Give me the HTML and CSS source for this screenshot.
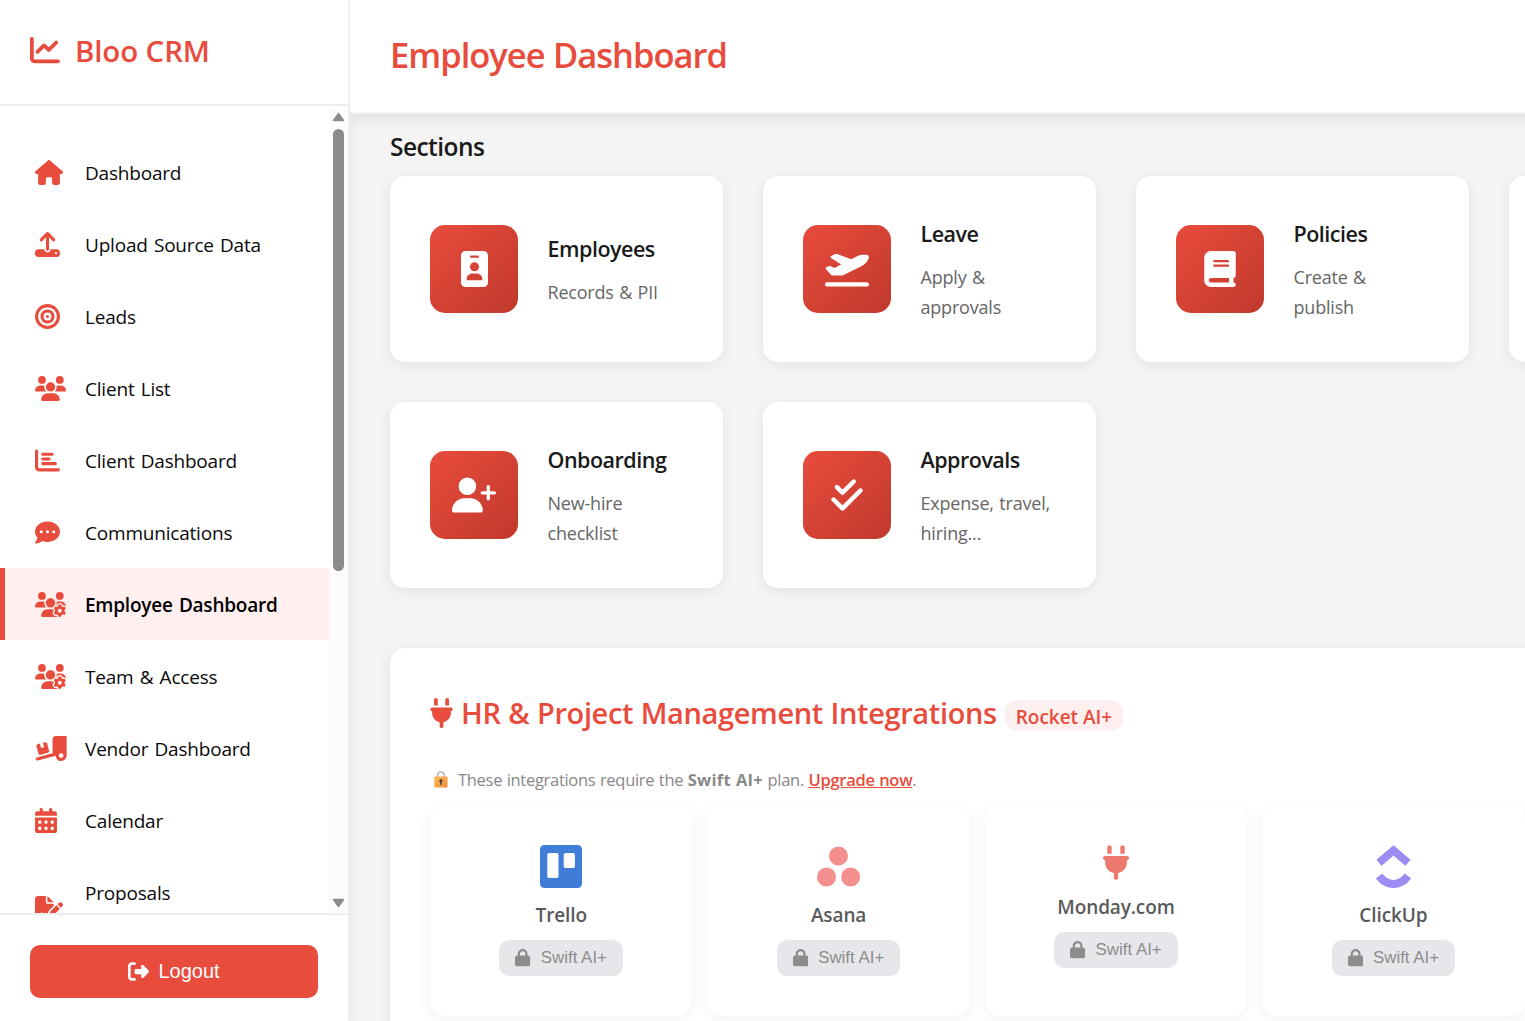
FILE: index.html
```html
<!DOCTYPE html>
<html lang="en">
<head>
<meta charset="utf-8">
<title>Bloo CRM</title>
<link rel="stylesheet" href="styles.css">
</head>
<body>
<svg class="sprite" aria-hidden="true">
  <symbol id="chart-line" viewBox="0 0 512 512"><path d="M64 64c0-17.7-14.3-32-32-32S0 46.3 0 64V400c0 44.2 35.8 80 80 80H480c17.7 0 32-14.3 32-32s-14.3-32-32-32H80c-8.8 0-16-7.2-16-16V64zm406.6 86.6c12.5-12.5 12.5-32.8 0-45.3s-32.8-12.5-45.3 0L320 210.7l-57.4-57.4c-12.5-12.5-32.8-12.5-45.3 0l-112 112c-12.5 12.5-12.5 32.8 0 45.3s32.8 12.5 45.3 0L240 221.3l57.4 57.4c12.5 12.5 32.8 12.5 45.3 0l128-128z"/></symbol>
  <symbol id="house" viewBox="0 0 576 512"><path d="M575.8 255.5c0 18-15 32.1-32 32.1h-32l.7 160.2c0 2.7-.2 5.4-.5 8.1V472c0 22.1-17.9 40-40 40H456c-1.1 0-2.2 0-3.3-.1c-1.4 .1-2.8 .1-4.2 .1H416 392c-22.1 0-40-17.9-40-40V448 384c0-17.7-14.3-32-32-32H256c-17.7 0-32 14.3-32 32v64 24c0 22.1-17.9 40-40 40H160 128.1c-1.5 0-3-.1-4.5-.2c-1.2 .1-2.4 .2-3.6 .2H104c-22.1 0-40-17.9-40-40V360c0-.9 0-1.9 .1-2.8V287.6H32c-18 0-32-14-32-32.1c0-9 3-17 10-24L266.4 8c7-7 15-8 22-8s15 2 21 7L564.8 231.5c8 7 12 15 11 24z"/></symbol>
  <symbol id="upload" viewBox="0 0 512 512"><path d="M288 109.3V352c0 17.7-14.3 32-32 32s-32-14.3-32-32V109.3l-73.4 73.4c-12.5 12.5-32.8 12.5-45.3 0s-12.5-32.8 0-45.3l128-128c12.5-12.5 32.8-12.5 45.3 0l128 128c12.5 12.5 12.5 32.8 0 45.3s-32.8 12.5-45.3 0L288 109.3zM64 352H192c0 35.3 28.7 64 64 64s64-28.7 64-64H448c35.3 0 64 28.7 64 64v32c0 35.3-28.7 64-64 64H64c-35.3 0-64-28.7-64-64V416c0-35.3 28.7-64 64-64zM432 456a24 24 0 1 0 0-48 24 24 0 1 0 0 48z"/></symbol>
  <symbol id="bullseye" viewBox="0 0 512 512"><path d="M448 256A192 192 0 1 0 64 256a192 192 0 1 0 384 0zM0 256a256 256 0 1 1 512 0A256 256 0 1 1 0 256zm256 80a80 80 0 1 0 0-160 80 80 0 1 0 0 160zm0-224a144 144 0 1 1 0 288 144 144 0 1 1 0-288zM224 256a32 32 0 1 1 64 0 32 32 0 1 1 -64 0z"/></symbol>
  <symbol id="users" viewBox="0 0 640 512"><path d="M144 0a80 80 0 1 1 0 160A80 80 0 1 1 144 0zM512 0a80 80 0 1 1 0 160A80 80 0 1 1 512 0zM0 298.7C0 239.8 47.8 192 106.7 192h42.7c15.9 0 31 3.5 44.6 9.7c-1.3 7.2-1.9 14.7-1.9 22.3c0 38.2 16.8 72.5 43.3 96c-.2 0-.4 0-.7 0H21.3C9.6 320 0 310.4 0 298.7zM405.3 320c-.2 0-.4 0-.7 0c26.6-23.5 43.3-57.8 43.3-96c0-7.6-.7-15-1.9-22.3c13.6-6.3 28.7-9.7 44.6-9.7h42.7C592.2 192 640 239.8 640 298.7c0 11.8-9.6 21.3-21.3 21.3H405.3zM224 224a96 96 0 1 1 192 0 96 96 0 1 1 -192 0zM128 485.3C128 411.7 187.7 352 261.3 352H378.7C452.3 352 512 411.7 512 485.3c0 14.7-11.9 26.7-26.7 26.7H154.7c-14.7 0-26.7-11.9-26.7-26.7z"/></symbol>
  <symbol id="chart-bar" viewBox="0 0 512 512"><path d="M32 32c17.7 0 32 14.3 32 32V400c0 8.8 7.2 16 16 16H480c17.7 0 32 14.3 32 32s-14.3 32-32 32H80c-44.2 0-80-35.8-80-80V64C0 46.3 14.3 32 32 32zm96 96c0-17.7 14.3-32 32-32l192 0c17.7 0 32 14.3 32 32s-14.3 32-32 32l-192 0c-17.7 0-32-14.3-32-32zm32 64H288c17.7 0 32 14.3 32 32s-14.3 32-32 32H160c-17.7 0-32-14.3-32-32s14.3-32 32-32zm0 96H416c17.7 0 32 14.3 32 32s-14.3 32-32 32H160c-17.7 0-32-14.3-32-32s14.3-32 32-32z"/></symbol>
  <symbol id="comment-dots" viewBox="0 0 512 512"><path d="M256 448c141.4 0 256-93.1 256-208S397.4 32 256 32S0 125.1 0 240c0 45.1 17.7 86.8 47.7 120.9c-1.9 24.5-11.4 46.3-21.4 62.9c-5.5 9.2-11.1 16.6-15.2 21.6c-2.1 2.5-3.7 4.4-4.9 5.7c-.6 .6-1 1.1-1.3 1.4l-.3 .3c-4.6 4.6-5.9 11.4-3.4 17.4c2.5 6 8.3 9.9 14.8 9.9c28.7 0 57.6-8.9 81.6-19.3c22.9-10 42.4-21.9 54.3-30.6c31.8 11.5 67 17.9 104.1 17.9zM128 208a32 32 0 1 1 0 64 32 32 0 1 1 0-64zm128 0a32 32 0 1 1 0 64 32 32 0 1 1 0-64zm96 32a32 32 0 1 1 64 0 32 32 0 1 1 -64 0z"/></symbol>
  <symbol id="users-gear" viewBox="0 0 640 512"><path d="M144 160A80 80 0 1 0 144 0a80 80 0 1 0 0 160zm368 0A80 80 0 1 0 512 0a80 80 0 1 0 0 160zM0 298.7C0 310.4 9.6 320 21.3 320H234.7c.2 0 .4 0 .7 0c-26.6-23.5-43.3-57.8-43.3-96c0-7.6 .7-15 1.9-22.3c-13.6-6.3-28.7-9.7-44.6-9.7H106.7C47.8 192 0 239.8 0 298.7zM320 320c24 0 45.9-8.8 62.7-23.3c2.5-3.7 5.2-7.3 8-10.7c2.7-3.3 5.7-6.1 9-8.3C410 262.3 416 243.9 416 224c0-53-43-96-96-96s-96 43-96 96s43 96 96 96zm65.4 60.2c-10.3-5.9-18.1-16.2-20.8-28.2H261.3C187.7 352 128 411.7 128 485.3c0 14.7 11.9 26.7 26.7 26.7H455.2c-2.1-5.2-3.2-10.9-3.2-16.4v-3c-1.3-.7-2.7-1.5-4-2.3l-2.6 1.5c-16.8 9.7-40.5 8-54.7-9.7c-4.5-5.6-8.6-11.5-12.4-17.6l-.1-.2-.1-.2-2.4-4.1-.1-.2-.1-.2c-3.4-6.2-6.4-12.6-9-19.3c-8.2-21.2 2.2-42.6 19-52.3l2.7-1.5c0-.8 0-1.5 0-2.3s0-1.5 0-2.3l-2.7-1.5zM533.3 192H490.7c-15.9 0-31 3.5-44.6 9.7c1.3 7.2 1.9 14.7 1.9 22.3c0 17.4-3.5 33.9-9.7 49c2.5 .9 4.9 2 7.1 3.3l2.6 1.5c1.3-.8 2.6-1.6 4-2.3v-3c0-19.4 13.3-39.1 35.8-42.6c7.9-1.2 16-1.9 24.2-1.9s16.3 .6 24.2 1.9c22.5 3.5 35.8 23.2 35.8 42.6v3c1.3 .7 2.7 1.5 4 2.3l2.6-1.5c16.8-9.7 40.5-8 54.7 9.7c2.3 2.8 4.5 5.8 6.6 8.7c-2.1-57.1-49-102.7-106.6-102.7zm91.3 163.9c6.3-3.6 9.5-11.1 6.8-18c-2.1-5.5-4.6-10.8-7.4-15.9l-2.3-4c-3.1-5.1-6.5-9.9-10.2-14.5c-4.6-5.7-12.7-6.7-19-3l-2.9 1.7c-9.2 5.3-20.4 4-29.6-1.3s-16.1-14.5-16.1-25.1v-3.4c0-7.3-4.9-13.8-12.1-14.9c-6.5-1-13.1-1.5-19.9-1.5s-13.4 .5-19.9 1.5c-7.2 1.1-12.1 7.6-12.1 14.9v3.4c0 10.6-6.9 19.8-16.1 25.1s-20.4 6.6-29.6 1.3l-2.9-1.7c-6.3-3.6-14.4-2.6-19 3c-3.7 4.6-7.1 9.5-10.2 14.6l-2.3 3.9c-2.8 5.1-5.3 10.4-7.4 15.9c-2.6 6.8 .5 14.3 6.8 17.9l2.9 1.7c9.2 5.3 13.7 15.8 13.7 26.4s-4.5 21.1-13.7 26.4l-3 1.7c-6.3 3.6-9.5 11.1-6.8 17.9c2.1 5.5 4.6 10.7 7.4 15.8l2.4 4.1c3 5.1 6.4 9.9 10.1 14.5c4.6 5.7 12.7 6.7 19 3l2.9-1.7c9.2-5.3 20.4-4 29.6 1.3s16.1 14.5 16.1 25.1v3.4c0 7.3 4.9 13.8 12.1 14.9c6.5 1 13.1 1.5 19.9 1.5s13.4-.5 19.9-1.5c7.2-1.1 12.1-7.6 12.1-14.9V492c0-10.6 6.9-19.8 16.1-25.1s20.4-6.6 29.6-1.3l2.9 1.7c6.3 3.6 14.4 2.6 19-3c3.7-4.6 7.1-9.4 10.1-14.5l2.4-4.2c2.8-5.1 5.3-10.3 7.4-15.8c2.6-6.8-.5-14.3-6.8-17.9l-3-1.7c-9.2-5.3-13.7-15.8-13.7-26.4s4.5-21.1 13.7-26.4l3-1.7zM472 384a40 40 0 1 1 80 0 40 40 0 1 1 -80 0z"/></symbol>
  <symbol id="truck-ramp" viewBox="0 0 640 512"><path d="M640 0V400c0 61.9-50.1 112-112 112c-61 0-110.5-48.7-112-109.3L48.4 502.9c-17.1 4.6-34.6-5.4-39.3-22.5s5.4-34.6 22.5-39.3L352 353.8V64c0-35.3 28.7-64 64-64H640zM576 400a48 48 0 1 0 -96 0 48 48 0 1 0 96 0zM23.1 207.7c-4.6-17.1 5.6-34.6 22.6-39.2l46.4-12.4 20.7 77.3c2.3 8.5 11.1 13.6 19.6 11.3l30.9-8.3c8.5-2.3 13.6-11.1 11.3-19.6l-20.7-77.3 46.4-12.4c17.1-4.6 34.6 5.6 39.2 22.6l41.4 154.5c4.6 17.1-5.6 34.6-22.6 39.2L103.7 384.9c-17.1 4.6-34.6-5.6-39.2-22.6L23.1 207.7z"/></symbol>
  <symbol id="calendar" viewBox="0 0 448 512"><path d="M128 0c17.7 0 32 14.3 32 32V64H288V32c0-17.7 14.3-32 32-32s32 14.3 32 32V64h48c26.5 0 48 21.5 48 48v48H0V112C0 85.5 21.5 64 48 64H96V32c0-17.7 14.3-32 32-32zM0 192H448V464c0 26.5-21.5 48-48 48H48c-26.5 0-48-21.5-48-48V192zm64 80v32c0 8.8 7.2 16 16 16h32c8.8 0 16-7.2 16-16V272c0-8.8-7.2-16-16-16H80c-8.8 0-16 7.2-16 16zm128 0v32c0 8.8 7.2 16 16 16h32c8.8 0 16-7.2 16-16V272c0-8.8-7.2-16-16-16H208c-8.8 0-16 7.2-16 16zm144-16c-8.8 0-16 7.2-16 16v32c0 8.8 7.2 16 16 16h32c8.8 0 16-7.2 16-16V272c0-8.8-7.2-16-16-16H336zM64 400v32c0 8.8 7.2 16 16 16h32c8.8 0 16-7.2 16-16V400c0-8.8-7.2-16-16-16H80c-8.8 0-16 7.2-16 16zm144-16c-8.8 0-16 7.2-16 16v32c0 8.8 7.2 16 16 16h32c8.8 0 16-7.2 16-16V400c0-8.8-7.2-16-16-16H208zm112 16v32c0 8.8 7.2 16 16 16h32c8.8 0 16-7.2 16-16V400c0-8.8-7.2-16-16-16H336c-8.8 0-16 7.2-16 16z"/></symbol>
  <symbol id="file-signature" viewBox="0 0 576 512"><path d="M64 0C28.7 0 0 28.7 0 64V448c0 35.3 28.7 64 64 64H320c35.3 0 64-28.7 64-64V428.7c-2.7 1.1-5.4 2-8.2 2.7l-60.1 15c-3 .7-6 1.2-9 1.4c-.9 .1-1.8 .2-2.7 .2H240c-6.1 0-11.6-3.4-14.3-8.8l-8.8-17.7c-1.7-3.4-5.1-5.5-8.8-5.5s-7.2 2.1-8.8 5.5l-8.8 17.7c-2.9 5.9-9.2 9.4-15.7 8.8s-12.1-5.1-13.9-11.3L144 381l-9.8 32.8c-6.1 20.3-24.8 34.2-46 34.2H80c-8.8 0-16-7.2-16-16s7.2-16 16-16h8.2c7.1 0 13.3-4.6 15.3-11.4l14.9-49.5c3.4-11.3 13.8-19.1 25.6-19.1s22.2 7.7 25.6 19.1l11.6 38.6c7.4-6.2 16.8-9.7 26.8-9.7c15.9 0 30.4 9 37.5 23.2l4.4 8.8h8.9c-3.1-8.8-3.7-18.4-1.4-27.8l15-60.1c2.8-11.3 8.6-21.5 16.8-29.7L384 203.6V160H256c-17.7 0-32-14.3-32-32V0H64zM256 0V128H384L256 0zM549.8 139.7c-15.6-15.6-40.9-15.6-56.6 0l-29.4 29.4 71 71 29.4-29.4c15.6-15.6 15.6-40.9 0-56.6l-14.4-14.4zM311.9 321c-4.1 4.1-7 9.2-8.4 14.9l-15 60.1c-1.4 5.5 .2 11.2 4.2 15.2s9.7 5.6 15.2 4.2l60.1-15c5.6-1.4 10.8-4.3 14.9-8.4L512.1 262.7l-71-71L311.9 321z"/></symbol>
  <symbol id="sign-out" viewBox="0 0 512 512"><path d="M377.9 105.9L500.7 228.7c7.2 7.2 11.3 17.1 11.3 27.3s-4.1 20.1-11.3 27.3L377.9 406.1c-6.4 6.4-15 9.9-24 9.9c-18.7 0-33.9-15.2-33.9-33.9l0-62.1-128 0c-17.7 0-32-14.3-32-32l0-64c0-17.7 14.3-32 32-32l128 0 0-62.1c0-18.7 15.2-33.9 33.9-33.9c9 0 17.6 3.6 24 9.9zM160 96L96 96c-17.7 0-32 14.3-32 32l0 256c0 17.7 14.3 32 32 32l64 0c17.7 0 32 14.3 32 32s-14.3 32-32 32l-64 0c-53 0-96-43-96-96L0 128C0 75 43 32 96 32l64 0c17.7 0 32 14.3 32 32s-14.3 32-32 32z"/></symbol>
  <symbol id="id-badge" viewBox="0 0 384 512"><path d="M64 0C28.7 0 0 28.7 0 64V448c0 35.3 28.7 64 64 64H320c35.3 0 64-28.7 64-64V64c0-35.3-28.7-64-64-64H64zm96 320h64c44.2 0 80 35.8 80 80c0 8.8-7.2 16-16 16H96c-8.8 0-16-7.2-16-16c0-44.2 35.8-80 80-80zm-32-96a64 64 0 1 1 128 0 64 64 0 1 1 -128 0zM144 64h96c8.8 0 16 7.2 16 16s-7.2 16-16 16H144c-8.8 0-16-7.2-16-16s7.2-16 16-16z" fill-rule="evenodd"/></symbol>
  <symbol id="plane" viewBox="0 0 640 512"><path d="M381 114.9L186.1 41.8c-16.7-6.2-35.2-5.3-51.1 2.7L89.1 67.4C78 73 77.2 88.5 87.6 95.2l146.9 94.5L136 240 77.8 214.1c-8.7-3.9-18.8-3.7-27.3 .6L18.3 230.8c-9.3 4.7-11.8 16.8-5 24.7l73.1 85.3c6.1 7.1 15 11.2 24.3 11.2H248.4c5 0 9.9-1.2 14.3-3.4L535.6 212.2c46.5-23.3 82.5-63.3 100.8-112C645.9 75 627.2 48 600.2 48H542.4c-20.2 0-40.2 4.8-58.2 14L381 114.9zM0 480c0 17.7 14.3 32 32 32H608c17.7 0 32-14.3 32-32s-14.3-32-32-32H32c-17.7 0-32 14.3-32 32z"/></symbol>
  <symbol id="book" viewBox="0 0 448 512"><path d="M96 0C43 0 0 43 0 96V416c0 53 43 96 96 96H384h32c17.7 0 32-14.3 32-32s-14.3-32-32-32V384c17.7 0 32-14.3 32-32V32c0-17.7-14.3-32-32-32H384 96zm0 384H352v64H96c-17.7 0-32-14.3-32-32s14.3-32 32-32zm32-240c0-8.8 7.2-16 16-16H336c8.8 0 16 7.2 16 16s-7.2 16-16 16H144c-8.8 0-16-7.2-16-16zm16 48H336c8.8 0 16 7.2 16 16s-7.2 16-16 16H144c-8.8 0-16-7.2-16-16s7.2-16 16-16z" fill-rule="evenodd"/></symbol>
  <symbol id="user-plus" viewBox="0 0 640 512"><path d="M96 128a128 128 0 1 1 256 0A128 128 0 1 1 96 128zM0 482.3C0 383.8 79.8 304 178.3 304h91.4C368.2 304 448 383.8 448 482.3c0 16.4-13.3 29.7-29.7 29.7H29.7C13.3 512 0 498.7 0 482.3zM504 312V248H440c-13.3 0-24-10.7-24-24s10.7-24 24-24h64V136c0-13.3 10.7-24 24-24s24 10.7 24 24v64h64c13.3 0 24 10.7 24 24s-10.7 24-24 24H552v64c0 13.3-10.7 24-24 24s-24-10.7-24-24z"/></symbol>
  <symbol id="check-double" viewBox="0 0 448 512"><path d="M342.6 86.6c12.5-12.5 12.5-32.8 0-45.3s-32.8-12.5-45.3 0L160 178.7l-57.4-57.4c-12.5-12.5-32.8-12.5-45.3 0s-12.5 32.8 0 45.3l80 80c12.5 12.5 32.8 12.5 45.3 0l160-160zm96 128c12.5-12.5 12.5-32.8 0-45.3s-32.8-12.5-45.3 0L160 402.7 54.6 297.4c-12.5-12.5-32.8-12.5-45.3 0s-12.5 32.8 0 45.3l128 128c12.5 12.5 32.8 12.5 45.3 0l256-256z"/></symbol>
  <symbol id="plug" viewBox="0 0 384 512"><path d="M96 0C78.3 0 64 14.3 64 32v96h64V32c0-17.7-14.3-32-32-32zM288 0c-17.7 0-32 14.3-32 32v96h64V32c0-17.7-14.3-32-32-32zM32 160c-17.7 0-32 14.3-32 32s14.3 32 32 32v32c0 77.4 55 142 128 156.8V480c0 17.7 14.3 32 32 32s32-14.3 32-32V412.8C297 398 352 333.4 352 256V224c17.7 0 32-14.3 32-32s-14.3-32-32-32H32z"/></symbol>
  <symbol id="lock" viewBox="0 0 448 512"><path d="M144 144v48H304V144c0-44.2-35.8-80-80-80s-80 35.8-80 80zM80 192V144C80 64.5 144.5 0 224 0s144 64.5 144 144v48h16c35.3 0 64 28.7 64 64V448c0 35.3-28.7 64-64 64H64c-35.3 0-64-28.7-64-64V256c0-35.3 28.7-64 64-64H80z"/></symbol>
</svg>

<div class="app">
  <aside class="sidebar">
    <div class="brand"><svg class="brand-icon"><use href="#chart-line"/></svg><span class="brand-name">Bloo CRM</span></div>
    <div class="nav-wrap">
      <nav class="nav">
        <a class="nav-item"><span class="nav-icon"><svg width="28" height="25"><use href="#house"/></svg></span><span>Dashboard</span></a>
        <a class="nav-item"><span class="nav-icon"><svg width="25" height="25"><use href="#upload"/></svg></span><span>Upload Source Data</span></a>
        <a class="nav-item"><span class="nav-icon"><svg width="25" height="25"><use href="#bullseye"/></svg></span><span>Leads</span></a>
        <a class="nav-item"><span class="nav-icon"><svg width="31" height="25"><use href="#users"/></svg></span><span>Client List</span></a>
        <a class="nav-item"><span class="nav-icon"><svg width="25" height="25"><use href="#chart-bar"/></svg></span><span>Client Dashboard</span></a>
        <a class="nav-item"><span class="nav-icon"><svg width="25" height="25"><use href="#comment-dots"/></svg></span><span>Communications</span></a>
        <a class="nav-item active"><span class="nav-icon"><svg width="31" height="25"><use href="#users-gear"/></svg></span><span>Employee Dashboard</span></a>
        <a class="nav-item"><span class="nav-icon"><svg width="31" height="25"><use href="#users-gear"/></svg></span><span>Team &amp; Access</span></a>
        <a class="nav-item"><span class="nav-icon"><svg width="32" height="25"><use href="#truck-ramp"/></svg></span><span>Vendor Dashboard</span></a>
        <a class="nav-item"><span class="nav-icon"><svg width="22" height="25"><use href="#calendar"/></svg></span><span>Calendar</span></a>
        <a class="nav-item tall"><span class="nav-icon"><svg width="28" height="25"><use href="#file-signature"/></svg></span><span class="label-top">Proposals</span></a>
      </nav>
      <div class="scrollbar">
        <svg class="arrow" viewBox="0 0 13 10"><path d="M6.5 1.5 11.5 8.5H1.5Z"/></svg>
        <div class="thumb"></div>
        <svg class="arrow down" viewBox="0 0 13 10"><path d="M6.5 8.5 11.5 1.5H1.5Z"/></svg>
      </div>
    </div>
    <div class="sidebar-foot">
      <button class="logout"><svg width="21" height="21"><use href="#sign-out"/></svg><span>Logout</span></button>
    </div>
  </aside>

  <main class="main">
    <header class="topbar"><h1>Employee Dashboard</h1></header>
    <div class="content">
      <h2 class="section-title">Sections</h2>
      <section class="cards">
        <article class="card"><div class="tile"><svg width="27" height="36"><use href="#id-badge"/></svg></div><div class="card-text"><h3>Employees</h3><p>Records &amp; PII</p></div></article>
        <article class="card"><div class="tile"><svg width="44" height="36"><use href="#plane"/></svg></div><div class="card-text"><h3>Leave</h3><p>Apply &amp;<br>approvals</p></div></article>
        <article class="card"><div class="tile"><svg width="32" height="36"><use href="#book"/></svg></div><div class="card-text"><h3>Policies</h3><p>Create &amp;<br>publish</p></div></article>
        <article class="card"></article>
        <article class="card"><div class="tile"><svg width="44" height="36"><use href="#user-plus"/></svg></div><div class="card-text"><h3>Onboarding</h3><p>New-hire<br>checklist</p></div></article>
        <article class="card"><div class="tile"><svg width="32" height="36"><use href="#check-double"/></svg></div><div class="card-text"><h3>Approvals</h3><p>Expense, travel,<br>hiring...</p></div></article>
      </section>

      <section class="panel">
        <div class="panel-head"><svg width="23" height="30"><use href="#plug"/></svg><h2>HR &amp; Project Management Integrations</h2><span class="pill">Rocket AI+</span></div>
        <p class="notice">
          <svg class="padlock" viewBox="0 0 14 17">
            <defs><linearGradient id="gold" x1="0" y1="0" x2="1" y2="1"><stop offset="0" stop-color="#ffbe55"/><stop offset="1" stop-color="#f0873c"/></linearGradient></defs>
            <path d="M3.6 6V4.2a3.2 3.2 0 0 1 6.4 0V6" fill="none" stroke="#b4b4b8" stroke-width="1.5"/>
            <rect x=".3" y="5.5" width="13.2" height="11" rx=".8" fill="url(#gold)"/>
            <path d="M6.9 8.2a1.6 1.6 0 0 1 .8 3v2.6H6.1v-2.6a1.6 1.6 0 0 1 .8-3z" fill="#4d4040"/>
          </svg>
          <span>These integrations require the <b>Swift AI+</b> plan. <a>Upgrade now</a>.</span>
        </p>
        <div class="apps">
          <article class="app-card"><svg class="logo" viewBox="0 0 43 43"><rect width="42" height="43" rx="4.5" fill="#0052cc"/><rect x="7.3" y="8" width="11.2" height="25" rx="1.8" fill="#fff"/><rect x="23.7" y="8" width="11.2" height="15" rx="1.8" fill="#fff"/></svg><h4>Trello</h4><button class="locked"><svg><use href="#lock"/></svg><span>Swift AI+</span></button></article>
          <article class="app-card"><svg class="logo" viewBox="0 0 43 43"><g fill="#f06a6a"><circle cx="21.5" cy="11" r="9.5"/><circle cx="9.5" cy="32" r="9.5"/><circle cx="33.6" cy="32" r="9.5"/></g></svg><h4>Asana</h4><button class="locked"><svg><use href="#lock"/></svg><span>Swift AI+</span></button></article>
          <article class="app-card"><svg class="logo-plug"><use href="#plug"/></svg><h4>Monday.com</h4><button class="locked"><svg><use href="#lock"/></svg><span>Swift AI+</span></button></article>
          <article class="app-card"><svg class="logo" viewBox="0 0 43 43"><g fill="none" stroke="#7b68ee" stroke-width="8"><path d="M7 17.8 21.5 5.4 36 17.8"/><path d="M7 31c8.2 10.7 20.8 10.7 29 0"/></g></svg><h4>ClickUp</h4><button class="locked"><svg><use href="#lock"/></svg><span>Swift AI+</span></button></article>
          <article class="app-card"></article>
        </div>
      </section>
    </div>
  </main>
</div>
</body>
</html>
```
FILE: styles.css
```css
* { box-sizing: border-box; }

html { overflow: hidden; }

body {
  margin: 0;
  height: 1021px;
  overflow: hidden;
  background: #f4f4f4;
  color: #1a1a1a;
  font-family: "Open Sans", "Noto Sans", sans-serif;
}

h1, h2, h3, h4, p { margin: 0; font-weight: 600; }
svg { display: block; flex: none; fill: currentColor; }
button { border: 0; font-family: "Liberation Sans", Arial, sans-serif; }
.sprite { display: none; }

.app { display: flex; width: 100%; height: 1021px; overflow: hidden; }

/* Sidebar */
.sidebar {
  display: flex;
  flex-direction: column;
  flex: none;
  width: 350px;
  background: #fff;
  border-right: 2px solid #eee;
  box-shadow: 2px 0 10px rgba(0, 0, 0, .05);
}
.brand {
  display: flex;
  flex: none;
  align-items: center;
  gap: 15px;
  height: 106px;
  padding: 0 30px 4px;
  border-bottom: 2px solid #eee;
  color: #e84c3d;
}
.brand-icon { width: 30px; height: 30px; }
.brand-name { font-size: 29.5px; font-weight: 600; letter-spacing: -.15px; }

.nav-wrap { display: flex; flex: none; height: 807px; overflow: hidden; }
.nav { flex: 1; padding-top: 30px; }
.nav-item {
  display: flex;
  align-items: center;
  gap: 20px;
  height: 72px;
  padding: 2px 0 0 30px;
  border-left: 5px solid transparent;
  color: #0a0a0a;
  font-size: 19px;
  line-height: 32px;
  letter-spacing: -.2px;
  word-spacing: 1.5px;
  white-space: nowrap;
}
.nav-item.active { background: #ffefee; border-left-color: #e84c3d; color: #000; font-weight: 600; letter-spacing: -.23px; }
.nav-item.tall { height: 104px; }
.label-top { align-self: flex-start; padding-top: 19px; }
.nav-icon { width: 30px; margin-bottom: 2px; color: #e84c3d; }

.scrollbar {
  display: flex;
  flex-direction: column;
  align-items: center;
  width: 19px;
  padding: 6px 0 5px;
  background: #fcfcfc;
}
.arrow { width: 13px; height: 10px; fill: #8b8b8b; stroke: #8b8b8b; stroke-width: 1.5; stroke-linejoin: round; }
.arrow.down { margin-top: auto; }
.thumb { width: 11px; height: 442px; margin-top: 7px; border-radius: 6px; background: #8b8b8b; }

.sidebar-foot { flex: 1; padding: 30px 30px 0; border-top: 2px solid #eee; }
.logout {
  display: flex;
  align-items: center;
  justify-content: center;
  gap: 9px;
  width: 288px;
  height: 53px;
  border-radius: 10px;
  background: #e84c3d;
  color: #fff;
  font-size: 20px;
}

/* Main column */
.main { flex: none; width: 1532px; }
.topbar {
  position: relative;
  display: flex;
  align-items: center;
  height: 114px;
  padding: 0 40px 4px;
  background: #fff;
  border-bottom: 2px solid #f3f3f3;
  box-shadow: 0 2px 15px rgba(0, 0, 0, .12);
  clip-path: inset(0 0 -20px 0);
  color: #e84c3d;
}
.topbar h1 { font-size: 34.5px; letter-spacing: -1px; word-spacing: .5px; }
.content { padding: 14px 40px 0; }
.section-title { font-size: 24.5px; line-height: 38px; letter-spacing: -.55px; margin-bottom: 10px; }

.cards { display: grid; grid-template-columns: repeat(4, 1fr); grid-auto-rows: 186px; gap: 40px; }
.card {
  display: flex;
  align-items: center;
  gap: 29.5px;
  padding: 40px;
  border-radius: 15px;
  background: #fff;
  box-shadow: 0 3px 13px rgba(0, 0, 0, .07);
}
.tile {
  display: grid;
  place-items: center;
  width: 88px;
  height: 88px;
  border-radius: 15px;
  background: linear-gradient(135deg, #e84c3d, #c0392b);
  color: #fff;
}
.card-text h3 { font-size: 21.5px; line-height: 36px; letter-spacing: -.5px; margin-bottom: 10px; }
.card-text p { font-size: 18px; font-weight: 400; line-height: 30px; letter-spacing: -.2px; word-spacing: 1px; color: #666; white-space: nowrap; }

.panel {
  margin-top: 60px;
  height: 460px;
  padding: 40px;
  border-radius: 15px;
  background: #fff;
  box-shadow: 0 3px 13px rgba(0, 0, 0, .07);
}
.panel-head { display: flex; align-items: center; height: 50px; color: #e84c3d; }
.panel-head h2 { margin-left: 8px; font-size: 29px; letter-spacing: -.37px; word-spacing: .5px; line-height: 50px; }
.pill {
  height: 31px;
  margin: 4px 0 0 8px;
  padding: 0 11px;
  border-radius: 12px;
  background: #ffefee;
  font-size: 19px;
  font-weight: 600;
  line-height: 34px;
  letter-spacing: -.05px;
}
.notice {
  display: flex;
  align-items: center;
  height: 30px;
  margin: 26px 0 11px;
  padding-left: 4px;
  gap: 10px;
  font-size: 16.5px;
  font-weight: 400;
  letter-spacing: -.3px;
  word-spacing: .6px;
  color: #888;
}
.padlock { width: 14px; height: 17px; }
.notice b { font-weight: 700; letter-spacing: .25px; }
.notice a { color: #e84c3d; font-weight: 600; text-decoration: underline; }

.apps { display: grid; grid-template-columns: repeat(5, 1fr); gap: 15px; grid-auto-rows: 211px; }
.app-card {
  display: flex;
  flex-direction: column;
  align-items: center;
  padding: 40px 20px;
  border-radius: 15px;
  background: #fff;
  box-shadow: 0 3px 13px rgba(0, 0, 0, .07);
  opacity: .75;
}
.logo { width: 43px; height: 43px; }
.logo-plug { width: 26px; height: 35px; color: #e84c3d; }
.app-card h4 { margin: 11px 0 9px; font-size: 19px; line-height: 32px; letter-spacing: -.12px; color: #222; }
.locked {
  display: flex;
  align-items: center;
  gap: 10px;
  height: 36px;
  padding: 0 16px;
  border-radius: 10px;
  background: #dfe0e5;
  color: #666;
  font-size: 16.9px;
}
.locked svg { width: 15.3px; height: 17.5px; }
```
